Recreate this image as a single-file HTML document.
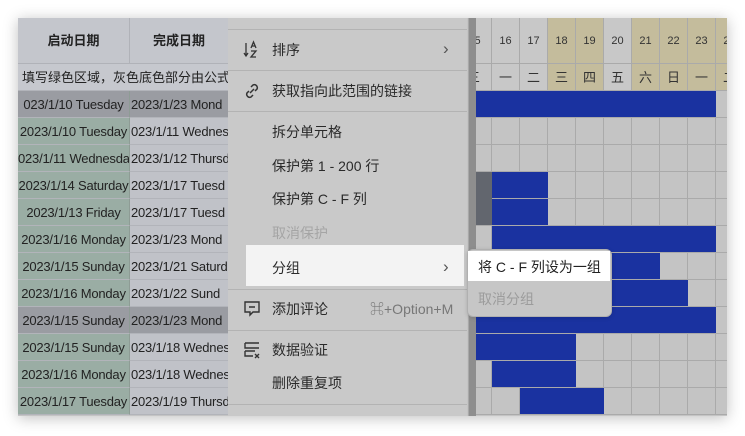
<!DOCTYPE html>
<html><head><meta charset="utf-8"><style>
body{margin:0;width:745px;height:436px;background:#fff;overflow:hidden;position:relative;font-family:"Liberation Sans","Noto Sans CJK SC",sans-serif}
.wrap{position:absolute;left:18px;top:18px;width:709px;height:398px;background:#c4c4c4;box-shadow:0 2px 14px rgba(0,0,0,.25);overflow:hidden}
.a{position:absolute;box-sizing:border-box}
.c{font-size:13px;color:#222;white-space:nowrap;overflow:hidden;line-height:27px;border-bottom:1px solid #b2b4ba}
.mi{position:absolute;left:272px;font-size:14px;color:#2a2a2a;line-height:20px}
.sep{position:absolute;left:228px;width:239px;height:1px;background:#b3b3b3}
.chev{position:absolute;left:443px;font-size:17px;color:#555;line-height:20px}
</style></head><body>
<div class="wrap">
<div class="a" style="left:0;top:0;width:112px;height:46px;background:#c4c6cc;border-right:1px solid #b0b2b8;border-bottom:1px solid #b0b2b8;font-size:13px;font-weight:bold;text-align:center;line-height:46px;color:#222">启动日期</div>
<div class="a" style="left:112px;top:0;width:98px;height:46px;background:#c4c6cc;border-bottom:1px solid #b0b2b8;font-size:13px;font-weight:bold;text-align:center;line-height:46px;color:#222">完成日期</div>
<div class="a c" style="left:0;top:46px;width:210px;height:27px;background:#c6c8ce;padding-left:4px;font-size:13px">填写绿色区域，灰色底色部分由公式</div>
</div>
<script>
var w=document.querySelector('.wrap');
var L=[["023/1/10 Tuesday","2023/1/23 Mond",1],["2023/1/10 Tuesday","023/1/11 Wednes",0],["023/1/11 Wednesda","2023/1/12 Thursd",0],["2023/1/14 Saturday","2023/1/17 Tuesd",0],["2023/1/13 Friday","2023/1/17 Tuesd",0],["2023/1/16 Monday","2023/1/23 Mond",0],["2023/1/15 Sunday","2023/1/21 Saturd",0],["2023/1/16 Monday","2023/1/22 Sund",0],["2023/1/15 Sunday","2023/1/23 Mond",1],["2023/1/15 Sunday","023/1/18 Wednes",0],["2023/1/16 Monday","023/1/18 Wednes",0],["2023/1/17 Tuesday","2023/1/19 Thursd",0]];
var h='';
L.forEach(function(r,i){var t=73+i*27;
h+='<div class="a c" style="left:0;top:'+t+'px;width:112px;height:27px;background:'+(r[2]?'#9a9ca2':'#9aada4')+';text-align:center;border-right:1px solid #8e9c95;letter-spacing:-0.2px">'+r[0]+'</div>';
h+='<div class="a c" style="left:112px;top:'+t+'px;width:98px;height:27px;background:'+(r[2]?'#9a9ca2':'#c0c2c8')+';padding-left:1px;letter-spacing:-0.2px">'+r[1]+'</div>';});
var cols=[["5",'#c8c8c8',"三"],["16",'#c8c8c8',"一"],["17",'#c8c8c8',"二"],["18",'#c4bc9c',"三"],["19",'#c4bc9c',"四"],["20",'#c8c8c8',"五"],["21",'#c4bc9c',"六"],["22",'#c4bc9c',"日"],["23",'#c4bc9c',"一"],["24",'#c4bc9c',"二"]];
cols.forEach(function(c,i){var x=i==0?458:474+(i-1)*28;var wd=i==0?16:28;
h+='<div class="a" style="left:'+x+'px;top:0;width:'+wd+'px;height:46px;background:'+c[1]+';border-right:1px solid #aaa;border-bottom:1px solid #aaa;font-size:11px;color:#333;line-height:46px;overflow:hidden;text-align:center;'+(i==0?'text-indent:-12px':'')+'">'+c[0]+'</div>';
h+='<div class="a" style="left:'+x+'px;top:46px;width:'+wd+'px;height:27px;background:'+c[1]+';border-right:1px solid #aaa;border-bottom:1px solid #aaa;font-size:13px;color:#333;line-height:27px;overflow:hidden;white-space:nowrap;'+(i==0?'text-indent:-9px':'text-align:center')+'">'+c[2]+'</div>';
for(var j=0;j<12;j++)h+='<div class="a" style="left:'+x+'px;top:'+(73+j*27)+'px;width:'+wd+'px;height:27px;border-right:1px solid #aaa;border-bottom:1px solid #aaa"></div>';});
var bars=[[0,458,698],[3,474,530],[4,474,530],[5,474,698],[6,474,642],[7,474,670],[8,458,698],[9,458,558],[10,474,558],[11,502,586]];
bars.forEach(function(b){h+='<div class="a" style="left:'+b[1]+'px;top:'+(73+b[0]*27)+'px;width:'+(b[2]-b[1])+'px;height:26px;background:#1a32a0"></div>';});
h+='<div class="a" style="left:458px;top:154px;width:16px;height:53px;background:#62666e"></div>';
h+='<div class="a" style="left:450px;top:0;width:8px;height:398px;background:#8e8e8e;border-left:1px solid #a8a8a8"></div>';
w.innerHTML+=h;
</script>
<div class="a" style="left:228px;top:18px;width:239px;height:398px;background:#c9c9c9"></div>
<div class="sep" style="top:29px"></div>
<div class="sep" style="top:70px"></div>
<div class="sep" style="top:111px"></div>
<div class="sep" style="top:289px"></div>
<div class="sep" style="top:330px"></div>
<div class="sep" style="top:404px"></div>
<svg class="a" style="left:243px;top:40px" width="18" height="20" viewBox="0 0 18 20" fill="none" stroke="#333" stroke-width="1.3"><path d="M3 3v13M1 13l2 3 2-3"/><path d="M8 8l2.5-6 2.5 6M9 6h3"/><path d="M8 11h5l-5 6h5"/></svg>
<svg class="a" style="left:243px;top:81px" width="18" height="20" viewBox="0 0 18 20" fill="none" stroke="#333" stroke-width="1.5"><path d="M8 6l2-2a3 3 0 014 4l-2 2M10 14l-2 2a3 3 0 01-4-4l2-2M7 12l4-4"/></svg>
<svg class="a" style="left:243px;top:299px" width="18" height="20" viewBox="0 0 18 20" fill="none" stroke="#333" stroke-width="1.4"><path d="M2 3h14v10H10l-3 3v-3H2z M6 8h6"/></svg>
<svg class="a" style="left:243px;top:340px" width="18" height="20" viewBox="0 0 18 20" fill="none" stroke="#333" stroke-width="1.4"><path d="M2 3h14M2 3v5h14M2 11v5h8M2 11h10M12 14l4 4M16 14l-4 4"/></svg>
<div class="mi" style="top:40px">排序</div><div class="chev" style="top:39px">›</div>
<div class="mi" style="top:81px">获取指向此范围的链接</div>
<div class="mi" style="top:122px">拆分单元格</div>
<div class="mi" style="top:156px">保护第 1 - 200 行</div>
<div class="mi" style="top:189px">保护第 C - F 列</div>
<div class="mi" style="top:223px;color:#a5a5a5">取消保护</div>
<div class="a" style="left:246px;top:245px;width:218px;height:41px;background:#f3f3f3"></div>
<div class="mi" style="top:258px">分组</div><div class="chev" style="top:257px">›</div>
<div class="mi" style="top:299px">添加评论</div><div class="mi" style="left:370px;top:299px;color:#777">⌘+Option+M</div>
<div class="mi" style="top:340px">数据验证</div>
<div class="mi" style="top:373px">删除重复项</div>
<div class="a" style="left:467px;top:249px;width:145px;height:68px;background:#c6c6c6;border:1px solid #b0b0b0;border-radius:6px;box-shadow:0 1px 4px rgba(0,0,0,.15)"></div>
<div class="a" style="left:468px;top:251px;width:142px;height:30px;background:#fff"></div>
<div class="mi" style="left:478px;top:257px;color:#222">将 C - F 列设为一组</div>
<div class="mi" style="left:478px;top:289px;color:#9c9c9c">取消分组</div>
</body></html>
